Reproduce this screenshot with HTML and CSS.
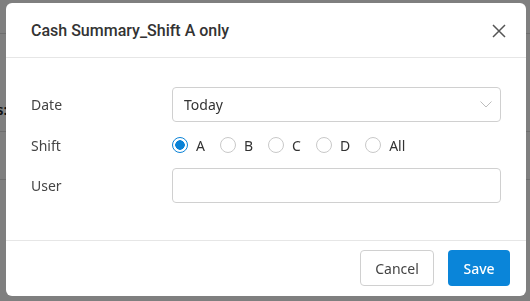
FILE: index.html
```html
<!DOCTYPE html>
<html>
<head>
<meta charset="utf-8">
<link rel="stylesheet" href="styles.css">
</head>
<body>
<div class="page">
  <div class="bg-row r1"></div>
  <div class="bg-row r2"><span class="bg-text">Notes:</span></div>
  <div class="bg-row r3"></div>
</div>
<div class="backdrop"></div>
<div class="modal">
  <div class="modal-header">
    <h2 class="modal-title">Cash Summary_Shift A only</h2>
    <button class="close-btn" aria-label="Close">
      <svg width="14" height="14" viewBox="0 0 14 14"><path d="M1 1 L13 13 M13 1 L1 13" stroke="#555" stroke-width="1.5" fill="none"/></svg>
    </button>
  </div>
  <div class="modal-body">
    <div class="form-row">
      <label class="form-label">Date</label>
      <div class="select">
        <span>Today</span>
        <svg class="chev" width="12" height="7" viewBox="0 0 12 7"><path d="M0.5 0.5 L6 6 L11.5 0.5" stroke="#bdbdbd" stroke-width="1" fill="none"/></svg>
      </div>
    </div>
    <div class="form-row radio-row">
      <label class="form-label">Shift</label>
      <div class="radios">
        <span class="radio checked"><span class="circle"></span>A</span>
        <span class="radio"><span class="circle"></span>B</span>
        <span class="radio"><span class="circle"></span>C</span>
        <span class="radio"><span class="circle"></span>D</span>
        <span class="radio"><span class="circle"></span>All</span>
      </div>
    </div>
    <div class="form-row">
      <label class="form-label">User</label>
      <div class="input"></div>
    </div>
  </div>
  <div class="modal-footer">
    <button class="btn btn-cancel">Cancel</button>
    <button class="btn btn-save">Save</button>
  </div>
</div>
</body>
</html>
```

FILE: styles.css
```css
* { box-sizing: border-box; }
html, body { margin: 0; padding: 0; }
body {
  width: 530px;
  height: 301px;
  overflow: hidden;
  background: #ffffff;
  font-family: "Noto Sans", "Open Sans", sans-serif;
  color: #333;
}
.page {
  display: flex;
  flex-direction: column;
}
.bg-row {
  border-bottom: 1px solid #dcdcdc;
  display: flex;
}
.r1 { height: 34px; }
.r2 {
  height: 98px;
  align-items: flex-end;
  padding-bottom: 12px;
}
.r3 { height: 48px; }
.bg-text {
  font-size: 14px;
  font-weight: 600;
  color: #222;
  margin-left: -37px;
}
.backdrop {
  position: fixed;
  inset: 0;
  background: rgba(0, 0, 0, 0.5);
}
.modal {
  position: fixed;
  left: 6px;
  top: 3px;
  width: 520px;
  height: 293px;
  background: #fff;
  border-radius: 6px;
  display: flex;
  flex-direction: column;
}
.modal-header {
  height: 55px;
  border-bottom: 1px solid #e6e6e6;
  display: flex;
  align-items: center;
  justify-content: space-between;
  padding: 0 20px 0 25px;
}
.modal-title {
  margin: 0;
  font-family: Roboto, "Noto Sans", sans-serif;
  font-size: 16px;
  font-weight: 500;
  color: #333;
}
.close-btn {
  border: 0;
  background: none;
  padding: 0;
  width: 14px;
  height: 14px;
  display: flex;
  margin-top: 1px;
}
.modal-body {
  flex: 1;
  padding: 29px 25px 0 25px;
  display: flex;
  flex-direction: column;
  gap: 11px;
}
.form-row {
  display: flex;
  align-items: center;
}
.form-label {
  width: 141px;
  font-size: 14px;
  color: #444;
}
.select, .input {
  width: 329px;
  height: 35px;
  border: 1px solid #d0d0d0;
  border-radius: 4px;
}
.select {
  display: flex;
  align-items: center;
  justify-content: space-between;
  padding: 0 8px 0 11px;
  font-size: 14px;
  color: #333;
}
.radio-row { height: 24px; }
.radios {
  display: flex;
  align-items: center;
  gap: 15px;
}
.radio {
  display: flex;
  align-items: center;
  gap: 8px;
  font-size: 14px;
  color: #333;
}
.circle {
  width: 16px;
  height: 16px;
  border-radius: 50%;
  border: 1px solid #c8c8c8;
  background: #fff;
  display: inline-block;
}
.radio.checked .circle {
  border-color: #0a82d6;
  background: radial-gradient(circle, #0a82d6 0 4.5px, #fff 5px);
}
.modal-footer {
  height: 56px;
  border-top: 1px solid #e6e6e6;
  display: flex;
  align-items: center;
  justify-content: flex-end;
  gap: 14px;
  padding: 0 16px 1px 0;
}
.btn {
  height: 36px;
  border-radius: 4px;
  font-family: inherit;
  font-size: 14px;
  padding: 0;
}
.btn-cancel {
  width: 74px;
  border: 1px solid #d0d0d0;
  background: #fff;
  color: #444;
}
.btn-save {
  width: 62px;
  border: 0;
  background: #0a85d9;
  color: #fff;
  font-weight: 500;
}
```
